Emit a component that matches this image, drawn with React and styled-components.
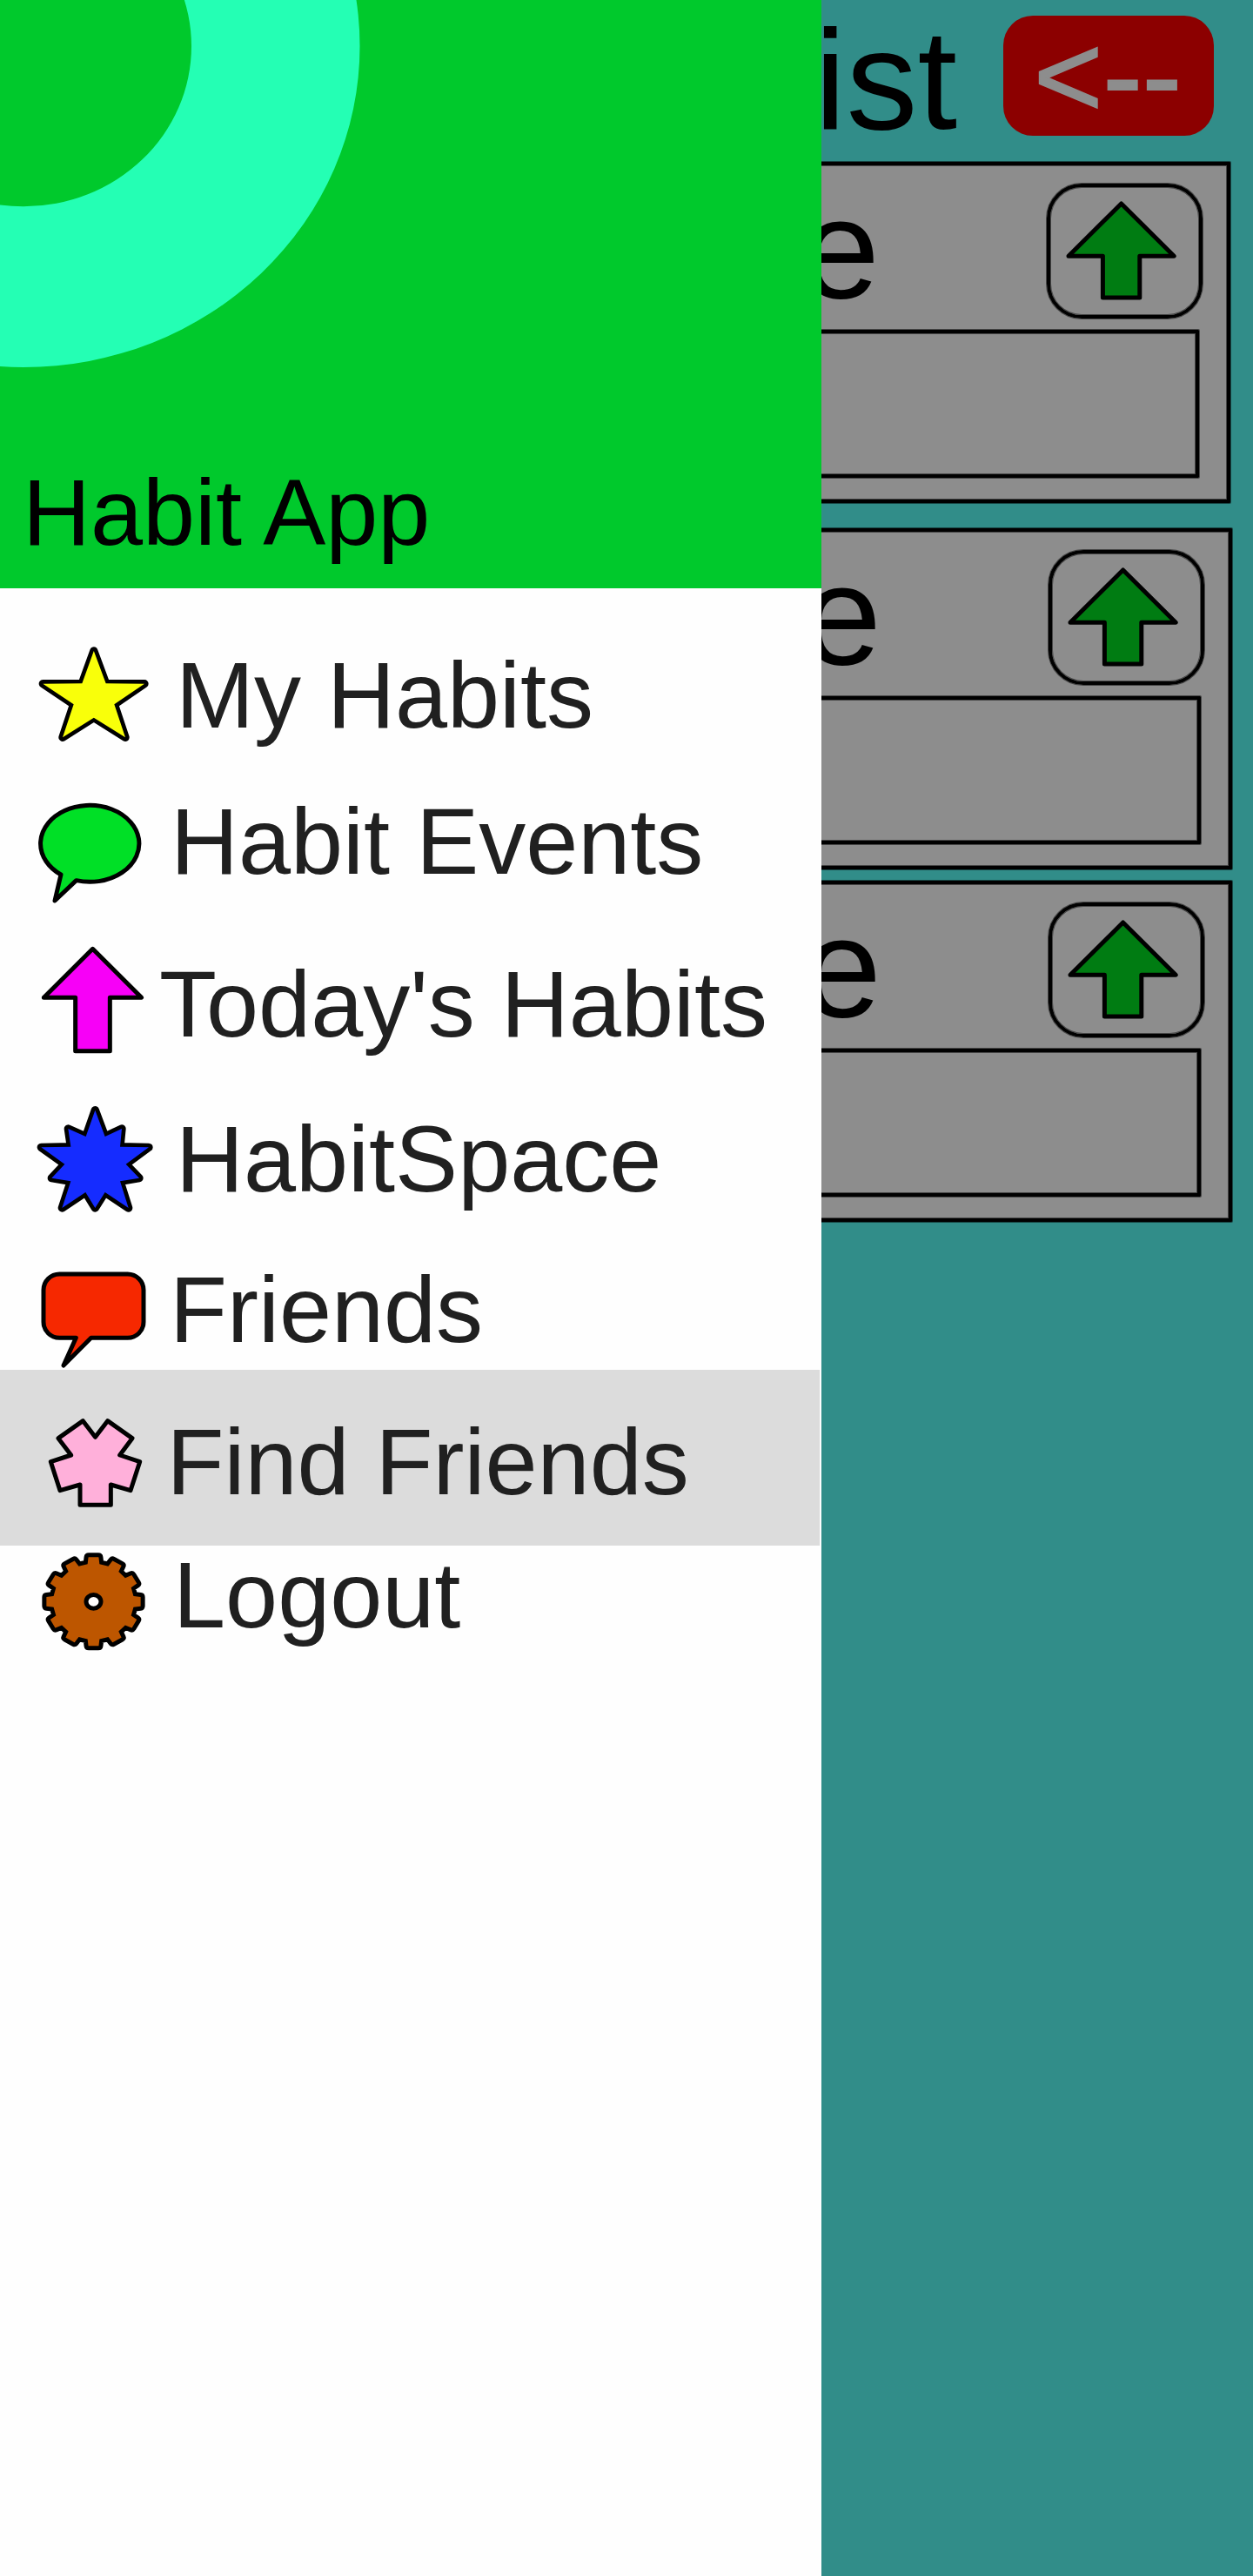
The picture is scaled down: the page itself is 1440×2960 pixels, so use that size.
import React from "react";
import styled, { createGlobalStyle } from "styled-components";

const GlobalStyle = createGlobalStyle`
  *, *::before, *::after { box-sizing: border-box; }
  body {
    margin: 0;
    background: #318d89;
    font-family: "Liberation Sans", Arial, Helvetica, sans-serif;
  }
`;

const Screen = styled.div`
  position: relative;
  width: 1440px;
  height: 2960px;
  overflow: hidden;
  background: #318d89;
`;

const Main = styled.main`
  display: flex;
  flex-direction: column;
`;

const TopBar = styled.header`
  display: flex;
  justify-content: flex-end;
  align-items: flex-start;
  height: 186px;
  padding: 18px 45px 0 0;
`;

const PageTitle = styled.h1`
  margin: 4px 53px 0 0;
  font-size: 164px;
  font-weight: 400;
  line-height: 140px;
  color: #000;
`;

const BackButton = styled.button`
  display: flex;
  justify-content: center;
  width: 242px;
  height: 137.5px;
  padding: 1px 2px 0 0;
  border: 0;
  border-radius: 34px;
  background: #8c0000;
  color: #8d8d8d;
  font-family: inherit;
  font-size: 136px;
  line-height: 137px;
  -webkit-text-stroke: 1.8px #8d8d8d;
`;

const outlined = `
  border: 4px solid #000;
  box-shadow: 0 0 0 1px rgba(0, 0, 0, 0.5), inset 0 0 0 1px rgba(0, 0, 0, 0.5);
`;

const Card = styled.article`
  ${outlined}
  display: flex;
  flex-direction: column;
  height: 392px;
  margin: 0 ${(p) => p.$right}px ${(p) => p.$after}px 24px;
  background: #8d8d8d;
  border-radius: 1px;
`;

const CardHeader = styled.div`
  display: flex;
  justify-content: flex-end;
  align-items: flex-start;
  height: 189px;
  padding: 21px 28px 0 0;
`;

const CardTitle = styled.h2`
  margin: 5px 192px 0 0;
  font-size: 164px;
  font-weight: 400;
  line-height: 140px;
  color: #000;
`;

const UpButton = styled.button`
  ${outlined}
  display: block;
  width: 179px;
  height: 155px;
  padding: 0;
  border-radius: 40px;
  background: transparent;
`;

const UpArrow = styled.svg`
  display: block;
  margin: -4px;
  width: 179px;
  height: 155px;
`;

const CardBody = styled.div`
  ${outlined}
  height: 170px;
  margin: 0 32px 0 20px;
  border-radius: 1px;
`;

const Drawer = styled.aside`
  position: absolute;
  top: 0;
  left: 0;
  width: 944px;
  height: 100%;
  background: #fefefe;
`;

const DrawerHeader = styled.div`
  position: relative;
  display: flex;
  align-items: flex-end;
  height: 676px;
  padding: 0 0 37px 26px;
  overflow: hidden;
  background: #00c92c;
`;

const Ring = styled.svg`
  position: absolute;
  top: 0;
  left: 0;
  width: 440px;
  height: 440px;
`;

const AppName = styled.div`
  font-size: 108px;
  line-height: 100px;
  color: #000;
`;

const Nav = styled.nav`
  display: flex;
  flex-direction: column;
  padding-top: 54px;
`;

const NavItem = styled.a`
  display: flex;
  align-items: flex-start;
  width: 942px;
  height: ${(p) => p.$height}px;
  background: ${(p) => (p.$active ? "#dcdcdc" : "transparent")};
`;

const NavIcon = styled.svg`
  flex: none;
  width: 180px;
  height: 100%;
  stroke: #000;
  stroke-width: ${(p) => p.$stroke || 15};
  stroke-linejoin: round;
`;

const NavLabel = styled.span`
  margin: ${(p) => p.$top}px 0 0 ${(p) => p.$left}px;
  font-size: 108px;
  line-height: 100px;
  white-space: nowrap;
  color: #202020;
`;

const Star = () => (
  <polygon
    fill="#f9ff0a"
    paintOrder="stroke"
    points="323.500,84 365,196 498,197 394,268 432,382 323.500,314 216,382 254,268 148,197 283,196"
  />
);

const RoundBubble = () => (
  <path
    fill="#00e026"
    d="M210 855 L189 945 L263 875 A170 132 0 1 0 210 855 Z"
  />
);

const Arrow = () => (
  <polygon
    fill="#f700f7"
    points="319.500,91 488,259 379,259 379,443 260,443 260,259 151,259"
  />
);

const Burst = () => (
  <polygon
    fill="#152cff"
    paintOrder="stroke"
    points="328,647 362,738 420,711 414,773 513,775 434,833 480,881 414,892 443,984 362,930 328,984 295,930 214,984 244,892 178,881 223,833 142,775 244,773 235,711 296,738"
  />
);

const SquareBubble = () => (
  <path
    fill="#f62800"
    d="M205 192 H440 A55 55 0 0 1 495 247 V357 A55 55 0 0 1 440 412 H314 L219 507 L262 412 H205 A55 55 0 0 1 150 357 V247 A55 55 0 0 1 205 192 Z"
  />
);

const Asterisk = () => (
  <polygon
    fill="#ffb0da"
    points="286,98 328.500,154 371,98 456,158 413,216 482,239 450,338 382,318 382,388 276,388 276,318 207,338 175,239 245,216 201,158"
  />
);

const gearPath = (() => {
  const at = (deg, r) => {
    const a = (deg * Math.PI) / 180;
    return [322.5 + 170 * r * Math.sin(a), 721 - 160.5 * r * Math.cos(a)];
  };
  const toward = (from, to, dist) => {
    const len = Math.hypot(to[0] - from[0], to[1] - from[1]);
    return from.map((v, i) => v + ((to[i] - v) * dist) / len);
  };
  const fmt = (p) => p.map((v) => v.toFixed(1)).join(" ");
  let d = "";
  for (let i = 0; i < 12; i++) {
    const c = i * 30;
    const rootA = at(c - 10.8, 0.86);
    const tipA = at(c - 8.2, 1.01);
    const tipB = at(c + 8.2, 1.01);
    const rootB = at(c + 10.8, 0.86);
    d += `${i ? "L" : "M"}${fmt(rootA)} L${fmt(toward(tipA, rootA, 7))} Q${fmt(tipA)} ${fmt(toward(tipA, tipB, 8))} `;
    d += `L${fmt(toward(tipB, tipA, 8))} Q${fmt(tipB)} ${fmt(toward(tipB, rootB, 7))} L${fmt(rootB)} `;
  }
  return d + "Z";
})();

const Gear = () => (
  <>
    <path fill="#bd5600" strokeLinejoin="miter" d={gearPath} />
    <ellipse cx="322.5" cy="721" rx="25.500" ry="23.500" fill="#fefefe" />
  </>
);

const items = [
  { label: "My Habits", Icon: Star, stroke: 28, height: 170, y: 30, top: 19, left: 22 },
  { label: "Habit Events", Icon: RoundBubble, height: 170, y: 540, top: 17, left: 16 },
  { label: "Today's Habits", Icon: Arrow, height: 180, y: 30, top: 34, left: 3 },
  { label: "HabitSpace", Icon: Burst, stroke: 28, height: 180, y: 570, top: 32, left: 22 },
  { label: "Friends", Icon: SquareBubble, height: 144, y: 90, top: 25, left: 15 },
  { label: "Find Friends", Icon: Asterisk, height: 202, y: -78, top: 56, left: 11.5, active: true },
  { label: "Logout", Icon: Gear, height: 144, y: 528, top: 7, left: 19 },
];

const cards = [
  { right: 26, after: 29 },
  { right: 24, after: 13 },
  { right: 24, after: 0 },
];

export default function App() {
  return (
    <>
      <GlobalStyle />
      <Screen>
        <Main>
          <TopBar>
            <PageTitle>ist</PageTitle>
            <BackButton>&lt;--</BackButton>
          </TopBar>
          {cards.map((card, i) => (
            <Card key={i} $right={card.right} $after={card.after}>
              <CardHeader>
                <CardTitle>e</CardTitle>
                <UpButton>
                  <UpArrow viewBox="0 0 179 155">
                    <polygon
                      points="85.6,22.9 146.2,83.3 106.8,83.3 106.8,131 64.4,131 64.4,83.3 25,83.3"
                      fill="#007c12"
                      stroke="#000"
                      strokeWidth="5"
                      strokeLinejoin="round"
                    />
                  </UpArrow>
                </UpButton>
              </CardHeader>
              <CardBody />
            </Card>
          ))}
        </Main>
        <Drawer>
          <DrawerHeader>
            <Ring viewBox="0 0 440 440">
              <path
                fill="#24ffb4"
                fillRule="evenodd"
                d="M-359.500 53 a386.500 369 0 1 0 773 0 a386.500 369 0 1 0 -773 0 Z M-166 53 a193 184.300 0 1 0 386 0 a193 184.300 0 1 0 -386 0 Z"
              />
            </Ring>
            <AppName>Habit App</AppName>
          </DrawerHeader>
          <Nav>
            {items.map(({ label, Icon, stroke, height, y, top, left, active }) => (
              <NavItem key={label} $height={height} $active={active}>
                <NavIcon $stroke={stroke} viewBox={`0 ${y} 540 ${height * 3}`}>
                  <Icon />
                </NavIcon>
                <NavLabel $top={top} $left={left}>{label}</NavLabel>
              </NavItem>
            ))}
          </Nav>
        </Drawer>
      </Screen>
    </>
  );
}
